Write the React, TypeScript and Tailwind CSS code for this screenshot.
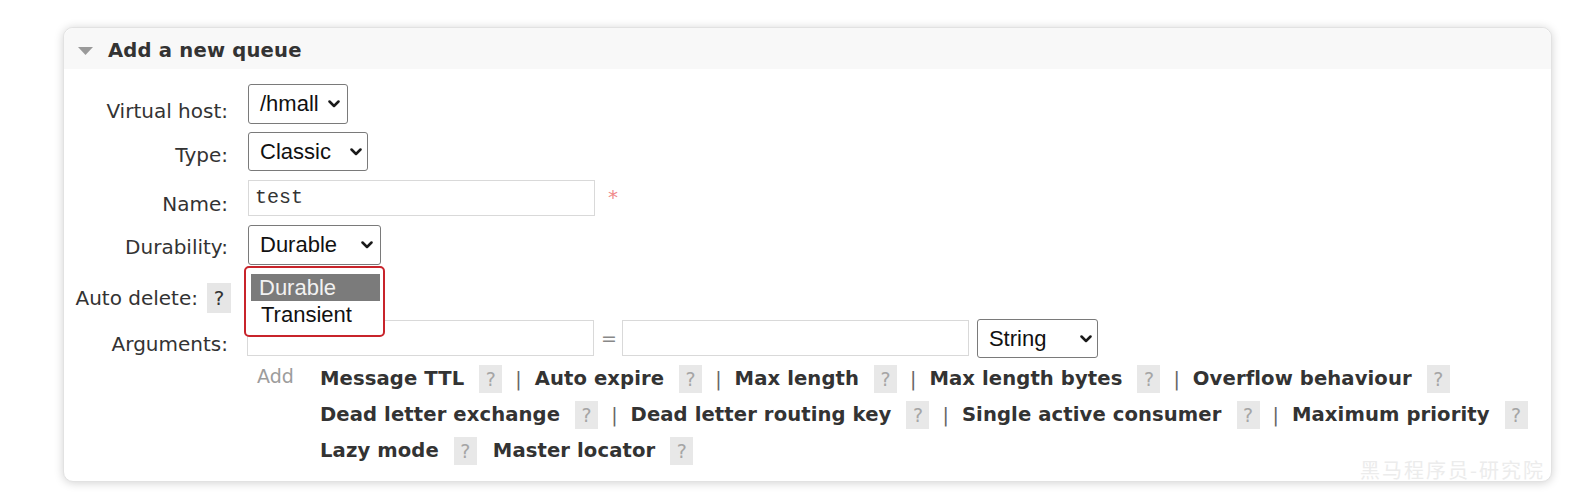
import React from "react";

const Chevron = () => (
  <svg width="12" height="8" viewBox="0 0 12 8" className="shrink-0">
    <path d="M1.5 1.5 L6 6 L10.5 1.5" stroke="#1a1a1a" strokeWidth="2.5" fill="none" strokeLinecap="round" strokeLinejoin="round" />
  </svg>
);

const Select = ({ text, cls }: { text: string; cls: string }) => (
  <div
    className={`flex items-center justify-between border border-[#7a7a7a] rounded-[3px] bg-white pl-[11px] text-[22px] text-[#111] ${cls}`}
    style={{ fontFamily: "'Liberation Sans', Arial, sans-serif" }}
  >
    <span className="leading-none">{text}</span>
    <Chevron />
  </div>
);

const Q = () => (
  <span className="inline-flex items-center justify-center w-[23px] h-[28px] bg-[#e8e8e8] text-[19px] font-normal text-[#a5a5a5]">
    ?
  </span>
);

const Sep = () => <span className="ml-[13px] mr-[13px] font-normal text-[#666] text-[19px]">|</span>;

const Item = ({ t }: { t: string }) => (
  <span className="flex items-center">
    <span className="font-bold text-[#333] text-[19.6px] tracking-[0.1px] whitespace-nowrap">{t}</span>
    <span className="ml-[15px]">
      <Q />
    </span>
  </span>
);

const Line = ({ items, sep = true }: { items: string[]; sep?: boolean }) => (
  <div className="flex items-center h-[36px]">
    {items.map((t, i) => (
      <React.Fragment key={t}>
        {i > 0 && (sep ? <Sep /> : <span className="w-[16px]" />)}
        <Item t={t} />
      </React.Fragment>
    ))}
  </div>
);

export default function App() {
  return (
    <div className="w-[1590px] h-[497px] bg-white overflow-hidden" style={{ fontFamily: "'DejaVu Sans', Verdana, sans-serif" }}>
      <div className="ml-[63px] mt-[27px] w-[1489px] relative rounded-[10px] border border-[#e2e2e2] bg-white shadow-[0_1px_10px_rgba(0,0,0,0.18)]">
        {/* header */}
        <div className="h-[41px] bg-[#f8f8f8] rounded-t-[10px] flex items-center pl-[13px] pt-[4px]">
          <svg width="17" height="10" viewBox="0 0 17 10" className="mt-[1px]">
            <path d="M1 1 L16 1 L8.5 9 Z" fill="#9a9a9a" />
          </svg>
          <span className="ml-[14px] font-bold text-[19.6px] tracking-[0.2px] text-[#333]">Add a new queue</span>
        </div>

        {/* body */}
        <div className="pl-[11px] pb-[11px] text-[20px] text-[#333]">
          {/* Virtual host */}
          <div className="flex mt-[15px] h-[40px]">
            <div className="w-[156px] text-right pr-[3px] pt-[15px] leading-[24px]">Virtual host:</div>
            <div className="ml-[17px]">
              <Select text="/hmall" cls="w-[100px] h-[40px] pr-[7px]" />
            </div>
          </div>

          {/* Type */}
          <div className="flex mt-[8px] h-[39px]">
            <div className="w-[156px] text-right pr-[3px] pt-[11px] leading-[24px]">Type:</div>
            <div className="ml-[17px]">
              <Select text="Classic" cls="w-[120px] h-[39px] pr-[5px]" />
            </div>
          </div>

          {/* Name */}
          <div className="flex mt-[9px] h-[36px]">
            <div className="w-[156px] text-right pr-[3px] pt-[12px] leading-[24px]">Name:</div>
            <div className="ml-[17px] flex items-start">
              <div
                className="w-[347px] h-[36px] border border-[#d9d9d9] flex items-center pl-[6px] text-[20px] text-[#333]"
                style={{ fontFamily: "'Liberation Mono', 'Courier New', monospace" }}
              >
                test
              </div>
              <span className="ml-[13px] mt-[2px] text-[20px] text-[#f08a8a]">*</span>
            </div>
          </div>

          {/* Durability */}
          <div className="flex mt-[9px] h-[40px]">
            <div className="w-[156px] text-right pr-[3px] pt-[10px] leading-[24px]">Durability:</div>
            <div className="ml-[17px] relative">
              <Select text="Durable" cls="w-[133px] h-[40px] pr-[7px]" />
              <div className="absolute left-[-4px] top-[41px] w-[141px] h-[71px] z-10 border-2 border-[#c8242b] rounded-[5px] bg-white pt-[6px] pl-[5px] pr-[3px]">
                <div className="text-[22px] leading-[26px]" style={{ fontFamily: "'Liberation Sans', Arial, sans-serif" }}>
                  <div className="h-[27px] bg-[#7b7b7b] text-[#f2f2f2] pl-[8px] flex items-center">Durable</div>
                  <div className="h-[27px] text-[#111] pl-[10px] flex items-center">Transient</div>
                </div>
              </div>
            </div>
          </div>

          {/* Auto delete */}
          <div className="flex mt-[18px] h-[30px]">
            <div className="w-[156px] flex justify-end items-start">
              <span className="pt-[3px] leading-[24px]">Auto delete:</span>
              <span className="ml-[9px] inline-flex items-center justify-center w-[24px] h-[30px] bg-[#e6e6e6] text-[#333] text-[20px]">?</span>
            </div>
          </div>

          {/* Arguments */}
          <div className="flex mt-[6px] h-[39px]">
            <div className="w-[156px] text-right pr-[3px] pt-[13px] leading-[24px]">Arguments:</div>
            <div className="ml-[16px] flex items-start">
              <div className="mt-[1px] w-[347px] h-[36px] border border-[#d9d9d9]" />
              <span className="ml-[7px] mt-[5px] text-[#888] text-[19px]">=</span>
              <div className="ml-[5px] mt-[1px] w-[347px] h-[36px] border border-[#d9d9d9]" />
              <div className="ml-[8px]">
                <Select text="String" cls="w-[121px] h-[39px] pr-[5px]" />
              </div>
            </div>
          </div>

          {/* Add links */}
          <div className="flex mt-[3px]">
            <div className="w-[156px]" />
            <div className="ml-[26px] w-[63px] h-[36px] flex items-center text-[19px] text-[#9c9c9c] pb-[6px]">Add</div>
            <div className="flex flex-col mb-[1px]">
              <Line items={["Message TTL", "Auto expire", "Max length", "Max length bytes", "Overflow behaviour"]} />
              <Line items={["Dead letter exchange", "Dead letter routing key", "Single active consumer", "Maximum priority"]} />
              <Line items={["Lazy mode", "Master locator"]} sep={false} />
            </div>
          </div>
        </div>

        <div
          className="absolute right-[6px] bottom-[1px] text-[20px] tracking-[2px] text-[#ececec] leading-none"
          style={{ fontFamily: "'Noto Sans CJK SC', sans-serif" }}
        >
          黑马程序员-研究院
        </div>
      </div>
    </div>
  );
}
